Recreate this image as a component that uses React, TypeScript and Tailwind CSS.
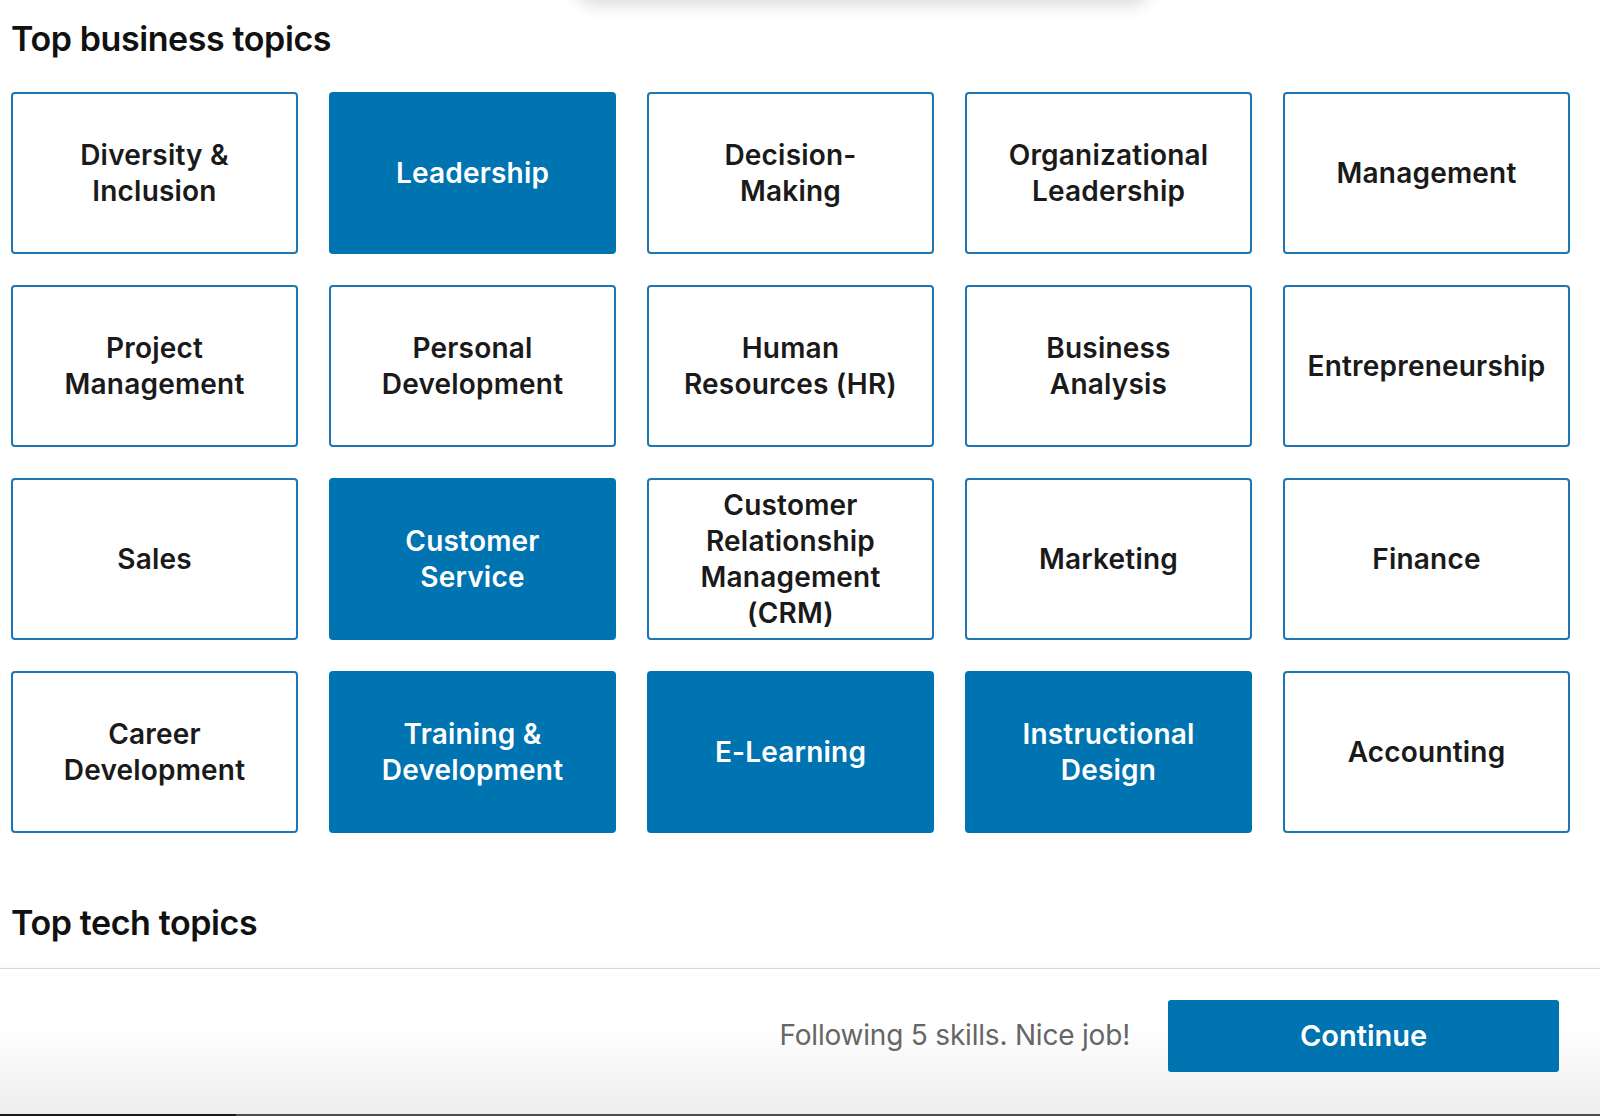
import React from "react";

type Topic = { lines: string[]; selected?: boolean };

const topics: Topic[] = [
  { lines: ["Diversity &", "Inclusion"] },
  { lines: ["Leadership"], selected: true },
  { lines: ["Decision-", "Making"] },
  { lines: ["Organizational", "Leadership"] },
  { lines: ["Management"] },
  { lines: ["Project", "Management"] },
  { lines: ["Personal", "Development"] },
  { lines: ["Human", "Resources (HR)"] },
  { lines: ["Business", "Analysis"] },
  { lines: ["Entrepreneurship"] },
  { lines: ["Sales"] },
  { lines: ["Customer", "Service"], selected: true },
  { lines: ["Customer", "Relationship", "Management", "(CRM)"] },
  { lines: ["Marketing"] },
  { lines: ["Finance"] },
  { lines: ["Career", "Development"] },
  { lines: ["Training &", "Development"], selected: true },
  { lines: ["E-Learning"], selected: true },
  { lines: ["Instructional", "Design"], selected: true },
  { lines: ["Accounting"] },
];

function TopicCard({ t }: { t: Topic }) {
  return (
    <button
      className={
        t.selected
          ? "h-[162px] rounded-[4px] border-2 border-[#0073b1] bg-[#0073b1] text-white flex flex-col items-center justify-center text-center"
          : "h-[162px] rounded-[4px] border-2 border-[#1f76b5] bg-white text-[#1a1a1a] flex flex-col items-center justify-center text-center"
      }
    >
      {t.lines.map((l, i) => (
        <span key={i} className="block whitespace-nowrap text-[28px] leading-[36px] font-semibold tracking-[0.2px]">
          {l}
        </span>
      ))}
    </button>
  );
}

export default function App() {
  return (
    <div
      className="relative h-[1116px] w-[1600px] overflow-hidden bg-white flex flex-col"
      style={{ fontFamily: "Inter, 'Noto Sans', 'Liberation Sans', sans-serif" }}
    >
      <div className="pointer-events-none absolute left-[575px] top-[-40px] h-[40px] w-[575px] rounded-[20px] shadow-[0_4px_18px_rgba(0,0,0,0.16)]" />

      <div className="pl-[11px] pr-[30px] pt-[17px]">
        <h2 className="text-[34px] leading-[44px] font-semibold text-[#111] tracking-[-0.4px]">Top business topics</h2>
        <div className="mt-[31px] grid w-[1559px] grid-cols-5 gap-x-[31px] gap-y-[31px]">
          {topics.map((t, i) => (
            <TopicCard key={i} t={t} />
          ))}
        </div>
        <h2 className="mt-[68px] text-[34px] leading-[44px] font-semibold text-[#111] tracking-[-0.4px]">Top tech topics</h2>
      </div>

      <div className="mt-auto flex flex-col">
        <div className="h-[1px] bg-[#d9d9d9] shadow-[0_-2px_4px_rgba(0,0,0,0.08)]" />
        <div className="flex h-[145px] items-start justify-end gap-[38px] bg-gradient-to-b from-white from-40% to-[#eeeeee] pr-[41px] pt-[31px]">
          <span className="mt-[17px] text-[28px] leading-[36px] font-normal text-[#666666] tracking-[-0.2px]">
            Following 5 skills. Nice job!
          </span>
          <button className="h-[72px] w-[391px] rounded-[3px] bg-[#0073b1] text-[29px] font-semibold text-white">
            Continue
          </button>
        </div>
        <div className="flex h-[2px]">
          <div className="w-[236px] bg-[#1a1a1a]" />
          <div className="flex-1 bg-[#4d4d4d]" />
        </div>
      </div>
    </div>
  );
}
